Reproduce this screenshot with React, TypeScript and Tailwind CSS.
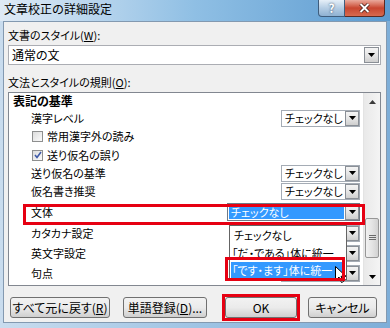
import React from 'react';

type Mode = 'normal' | 'open' | 'covered';

type Row = {
  label: string;
  h: string;
  kind: 'head' | 'item' | 'check';
  checked?: boolean;
  combo?: Mode;
};

const rows: Row[] = [
  { label: '表記の基準', h: 'h-[16px]', kind: 'head' },
  { label: '漢字レベル', h: 'h-[18px]', kind: 'item', combo: 'normal' },
  { label: '常用漢字外の読み', h: 'h-[19px]', kind: 'check', checked: false },
  { label: '送り仮名の誤り', h: 'h-[18px]', kind: 'check', checked: true },
  { label: '送り仮名の基準', h: 'h-[18px]', kind: 'item', combo: 'normal' },
  { label: '仮名書き推奨', h: 'h-[19px]', kind: 'item', combo: 'normal' },
  { label: '文体', h: 'h-[22px]', kind: 'item', combo: 'open' },
  // these three sit under the open list, only their buttons peek out
  { label: 'カタカナ設定', h: 'h-[20px]', kind: 'item', combo: 'covered' },
  { label: '英文字設定', h: 'h-[20px]', kind: 'item', combo: 'covered' },
  { label: '句点', h: 'h-[20px]', kind: 'item', combo: 'covered' },
];

const DownTri = () => (
  <svg width="7" height="4" viewBox="0 0 7 4">
    <path d="M0 0h7L3.5 4z" fill="#000" />
  </svg>
);

const ArrowBtn = ({ className = '' }: { className?: string }) => (
  <div
    className={`flex items-center justify-center border border-[#8a8f96] bg-gradient-to-b from-[#f4f4f4] via-[#e6e6e6] to-[#cfcfcf] ${className}`}
  >
    <DownTri />
  </div>
);

const Combo = ({ mode }: { mode: Mode }) => {
  if (mode === 'open') {
    return (
      <div className="flex h-[18px] w-[133px] items-stretch border border-[#6f7a86] bg-white">
        <div className="m-[1px] flex flex-1 items-center bg-[#3399ff] pl-[2px] text-[11px] text-white">
          チェックなし
        </div>
        <ArrowBtn className="w-[14px]" />
      </div>
    );
  }
  return (
    <div className="flex h-[17px] w-[79px] items-stretch border border-[#a5acb5] bg-white">
      <div className="flex flex-1 items-center overflow-hidden pl-[3px] text-[11px]">
        {mode === 'normal' ? 'チェックなし' : null}
      </div>
      <ArrowBtn className="w-[14px]" />
    </div>
  );
};

const CheckBox = ({ checked }: { checked?: boolean }) => (
  <div className="flex h-[11px] w-[11px] items-center justify-center border border-[#8e8f8f] bg-gradient-to-br from-[#dcdcdc] to-[#fbfbfb]">
    {checked && (
      <svg width="8" height="8" viewBox="0 0 8 8">
        <path d="M1 4l2 2.5L7 1" stroke="#3f5aa8" strokeWidth="1.6" fill="none" />
      </svg>
    )}
  </div>
);

const Button = ({ label, className = '' }: { label: React.ReactNode; className?: string }) => (
  <div
    className={`flex h-[21px] items-center justify-center rounded-[3px] border border-[#707070] bg-gradient-to-b from-[#f2f2f2] via-[#ebebeb] to-[#cfcfcf] text-[12px] ${className}`}
  >
    {label}
  </div>
);

export default function App() {
  return (
    <div className="relative h-[328px] w-[390px] overflow-hidden whitespace-nowrap bg-gradient-to-r from-[#c9dcee] via-[#9fc4e4] to-[#7eaed8] font-['Noto_Sans_CJK_JP','Noto_Sans',sans-serif] text-[11px] text-black [font-feature-settings:'palt']">
      {/* Title bar */}
      <div className="flex h-[21px] items-start bg-gradient-to-r from-[#dfeaf5] via-[#8fbfe4] to-[#5c9bd0]">
        <span className="pl-[4px] pt-[1px] text-[12px] leading-[16px] text-black [font-feature-settings:normal]">
          文章校正の詳細設定
        </span>
        <div className="ml-auto mr-[5px] flex">
          <div className="flex h-[17px] w-[27px] items-center justify-center rounded-bl-[4px] border border-t-0 border-[#3f5d7d] bg-gradient-to-b from-[#e6eff8] via-[#b5cde4] to-[#8fb1d2] text-[12px] font-bold leading-none text-white [text-shadow:0_0_2px_#1f3550]">
            ?
          </div>
          <div className="flex h-[17px] w-[40px] items-center justify-center rounded-br-[4px] border border-l-0 border-t-0 border-[#5b2a22] bg-gradient-to-b from-[#e9a99c] via-[#c8452f] to-[#d76a4f]">
            <svg width="11" height="10" viewBox="0 0 11 10">
              <path d="M1.5 1l8 8M9.5 1l-8 8" stroke="#3a1510" strokeWidth="3.4" />
              <path d="M1.5 1l8 8M9.5 1l-8 8" stroke="#fff" strokeWidth="2" />
            </svg>
          </div>
        </div>
      </div>

      {/* Content panel */}
      <div className="mx-[3px] h-[302px] border border-[#8399b0] bg-[#f0f0f0] px-[4px]">
        <div className="mt-[6px] leading-[14px]">
          文書のスタイル(<span className="underline">W</span>):
        </div>
        <div className="mt-[3px] mr-[1px] flex h-[20px] items-stretch border border-[#abadb3] bg-white">
          <div className="flex flex-1 items-center pl-[3px] text-[12px]">通常の文</div>
          <ArrowBtn className="m-[1px] w-[15px]" />
        </div>

        <div className="mt-[10px] leading-[14px]">
          文法とスタイルの規則(<span className="underline">O</span>):
        </div>

        {/* Rules list */}
        <div className="relative mt-[3px] mr-[1px] flex h-[194px] border border-[#828790] bg-white">
          <div className="flex flex-1 flex-col">
            {rows.map((r) => (
              <div key={r.label} className={`flex items-center pr-[3px] ${r.h}`}>
                {r.kind === 'head' && (
                  <span className="pl-[4px] text-[12px] font-bold">{r.label}</span>
                )}
                {r.kind === 'item' && <span className="pl-[22px]">{r.label}</span>}
                {r.kind === 'check' && (
                  <div className="flex items-center gap-[4px] pl-[23px]">
                    <CheckBox checked={r.checked} />
                    <span>{r.label}</span>
                  </div>
                )}
                {r.combo && (
                  <div className="ml-auto">
                    <Combo mode={r.combo} />
                  </div>
                )}
              </div>
            ))}
          </div>

          {/* Scrollbar */}
          <div className="flex w-[17px] flex-col items-center border-l border-[#e3e3e3] bg-gradient-to-r from-[#e9e9e9] to-[#f4f4f4]">
            <div className="flex h-[17px] items-center justify-center">
              <svg width="7" height="4" viewBox="0 0 7 4">
                <path d="M0 4h7L3.5 0z" fill="#3a3a3a" />
              </svg>
            </div>
            <div className="mt-[108px] flex h-[40px] w-[14px] items-center justify-center rounded-[2px] border border-[#979797] bg-gradient-to-r from-[#f1f1f1] via-[#e4e4e4] to-[#d2d2d2]">
              <svg width="7" height="6" viewBox="0 0 7 6">
                <path d="M0 0.5h7M0 2.5h7M0 4.5h7" stroke="#6a6a6a" strokeWidth="1" />
              </svg>
            </div>
            <div className="mt-auto flex h-[17px] items-center justify-center">
              <DownTri />
            </div>
          </div>

          {/* Open dropdown list */}
          <div className="absolute left-[220px] top-[132px] flex h-[55px] w-[118px] flex-col overflow-hidden border border-[#646464] bg-white p-[1px]">
            <div className="flex h-[18px] items-center pl-[3px]">チェックなし</div>
            <div className="flex h-[18px] items-center pl-[1px]">「だ・である」体に統一</div>
            <div className="flex h-[17px] items-center bg-[#3399ff] pl-[1px] text-white">「です・ます」体に統一</div>
          </div>

          {/* Annotations */}
          <div className="absolute left-[14px] top-[111px] h-[21px] w-[342px] border-[3px] border-[#e60012]" />
          <svg className="absolute left-[326px] top-[173px]" width="12" height="18" viewBox="0 0 12 18">
            <path d="M0.5 0.5v14l3.5-3.5 2.5 5.5 2-1-2.5-5.2h5z" fill="#fff" stroke="#000" strokeWidth="1" />
          </svg>
          <div className="absolute left-[216px] top-[164px] h-[24px] w-[120px] border-[3px] border-[#e60012]" />
        </div>

        {/* Buttons */}
        <div className="mt-[8px] flex items-center">
          <Button
            className="ml-[2px] w-[100px]"
            label={
              <>
                すべて元に戻す(<span className="underline">R</span>)
              </>
            }
          />
          <Button
            className="ml-[13px] w-[84px]"
            label={
              <>
                単語登録(<span className="underline">D</span>)...
              </>
            }
          />
          <div className="ml-[15px] border-[3px] border-[#e60012]">
            <Button className="w-[72px] border-[#3c7fb1] from-[#eaf6fd] via-[#d9f0fc] to-[#a7d9f5]" label="OK" />
          </div>
          <Button className="ml-[8px] w-[69px]" label="キャンセル" />
        </div>
      </div>
    </div>
  );
}
